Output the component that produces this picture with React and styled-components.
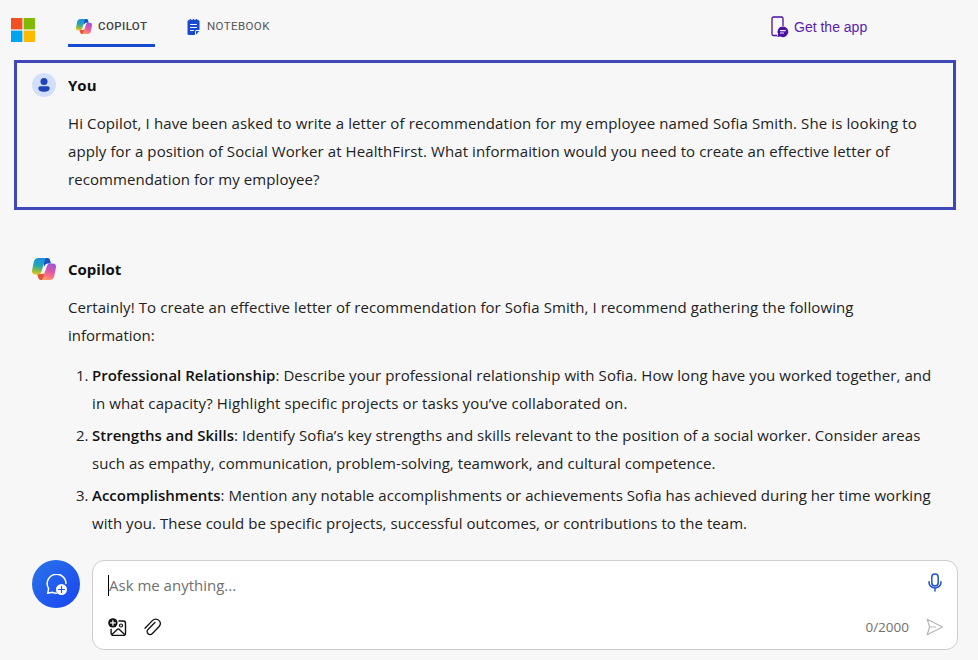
import React from 'react'
import styled, { createGlobalStyle } from 'styled-components'

const GlobalStyle = createGlobalStyle`
    * {
        box-sizing: border-box;
    }
    body {
        margin: 0;
        background: #f7f7f7;
        color: #111;
        font-family: "Open Sans", "Noto Sans", sans-serif;
        overflow: hidden;
    }
`

function MicrosoftLogo() {
    return (
        <svg width="24" height="24" viewBox="0 0 24 24">
            <path d="M0 0h11.4v11.4H0z" fill="#f25022" />
            <path d="M12.6 0H24v11.4H12.6z" fill="#7fba00" />
            <path d="M0 12.6h11.4V24H0z" fill="#00a4ef" />
            <path d="M12.6 12.6H24V24H12.6z" fill="#ffb900" />
        </svg>
    )
}

function CopilotLogo({ id, width, height }) {
    return (
        <svg width={width} height={height} viewBox="0 0 24 22" preserveAspectRatio="none">
            <defs>
                <linearGradient id={`${id}-left`} x1="0.5" y1="0" x2="0.35" y2="1">
                    <stop offset="0" stopColor="#1c8ee0" />
                    <stop offset="0.45" stopColor="#22a5b4" />
                    <stop offset="0.75" stopColor="#7fba4c" />
                    <stop offset="1" stopColor="#f0c319" />
                </linearGradient>
                <linearGradient id={`${id}-right`} x1="0.7" y1="0" x2="0.35" y2="1">
                    <stop offset="0" stopColor="#9a55e0" />
                    <stop offset="0.45" stopColor="#dc58a8" />
                    <stop offset="0.75" stopColor="#fa7080" />
                    <stop offset="1" stopColor="#fba06a" />
                </linearGradient>
            </defs>
            <path d="M11 0h4.500c1.500 0 2.100.8 2.500 2l1 3.500h-3.200c-1.500 0-2.300.7-2.800 2L12 9z" fill="#1b50c4" />
            <path d="M13 22H9c-1.700 0-2.300-1-2.800-2.500L5.200 16H9c1.400 0 2-1 2.500-2.200l1.500-3z" fill="#e45335" />
            <path d="M6.500 0h8.300c-1.200.3-1.700 1.500-2.100 2.800L9.700 12.800C9 15 8 16.500 5.800 16.500H3.300C.4 16.500-.4 14.300.1 12L1.800 4C2.500 1.300 3.900 0 6.500 0z" fill={`url(#${id}-left)`} />
            <path d="M17.500 22H9.200c1.200-.300 1.700-1.500 2.100-2.800l3-10c.7-2.200 1.700-3.700 3.900-3.700h2.500c2.900 0 3.700 2.200 3.200 4.500l-1.700 8c-.7 2.700-2.100 4-4.700 4z" fill={`url(#${id}-right)`} />
            <path d="M14.600 6.500h1.200c-.8.700-1.200 1.700-1.500 2.700l-2 6.600H9.400c.9-.6 1.300-1.600 1.600-2.600l1.200-4c.4-1.400 1-2.500 2.400-2.700z" fill="#fbf6f8" />
        </svg>
    )
}

function NotebookIcon() {
    return (
        <svg width="13" height="16" viewBox="0 0 13 16">
            <path d="M2 1h.7V0h1.500v1h1.500V0h1.500v1h1.500V0h1.500v1h.8a1.500 1.500 0 0 1 1.500 1.500V11H9.500A1.500 1.500 0 0 0 8 12.500V16H2a1.500 1.500 0 0 1-1.500-1.500v-12A1.500 1.500 0 0 1 2 1z" fill="#174ad1" />
            <path d="M9 12h3.300L9 15.400z" fill="#174ad1" />
            <path d="M3.500 5.500h6M3.500 8.500h6M3.500 11.500h3" stroke="#f7f7f7" strokeWidth="1" strokeLinecap="round" />
        </svg>
    )
}

function PhoneIcon() {
    return (
        <svg width="18" height="22" viewBox="0 0 18 22">
            <path d="M6 19.500H2.500a1.500 1.500 0 0 1-1.500-1.500V2.500A1.500 1.500 0 0 1 2.500 1h8A1.500 1.500 0 0 1 12 2.500V10" fill="none" stroke="#4a12a3" strokeWidth="1.300" />
            <path d="M12 10.500a5.300 5.300 0 1 1-2.500 10L6.300 21l.8-2.800A5.300 5.300 0 0 1 12 10.500z" fill="#4a12a3" />
            <path d="M9.500 14.600h4.800M9.500 17h3" stroke="#f7f7f7" strokeWidth="1.200" strokeLinecap="round" />
        </svg>
    )
}

function PersonIcon() {
    return (
        <svg width="12" height="14" viewBox="0 0 12 14">
            <circle cx="6" cy="3.500" r="3.500" fill="#1d45b8" />
            <path d="M2.300 8.300h7.400c1.200 0 2 .8 2 1.900 0 2.300-2.600 3.600-5.700 3.600S.3 12.500.3 10.200c0-1.100.8-1.900 2-1.900z" fill="#1d45b8" />
        </svg>
    )
}

function NewTopicIcon() {
    return (
        <svg width="22" height="22" viewBox="0 0 22 22" fill="none">
            <path d="M10.500 19.200c-1.500 0-2.800-.3-4-.9l-4.800 1 .9-4.700A9.400 9.400 0 1 1 20 9.500" stroke="#fff" strokeWidth="1.500" strokeLinejoin="round" strokeLinecap="round" />
            <circle cx="15.500" cy="15.500" r="5.500" fill="#fff" />
            <path d="M15.500 12.500v6M12.500 15.500h6" stroke="#1d58e8" strokeWidth="1.200" strokeLinecap="round" />
        </svg>
    )
}

function AddImageIcon() {
    return (
        <svg width="19" height="19" viewBox="0 0 19 19" fill="none">
            <path d="M10.500 3h4.800A2.200 2.200 0 0 1 17.500 5.200v10A2.200 2.200 0 0 1 15.300 17.400h-10A2.200 2.200 0 0 1 3.100 15.200v-4.500" stroke="#111" strokeWidth="1.400" />
            <path d="M4 16.500l5.200-5a1.600 1.600 0 0 1 2.200 0l5.200 5" stroke="#111" strokeWidth="1.300" />
            <circle cx="13" cy="7.500" r="1.500" stroke="#111" strokeWidth="1.200" />
            <circle cx="4.900" cy="4.900" r="4.700" fill="#111" />
            <path d="M4.900 2.500v4.800M2.500 4.900h4.800" stroke="#fff" strokeWidth="1.200" strokeLinecap="round" />
        </svg>
    )
}

function ClipIcon() {
    return (
        <svg width="18" height="18" viewBox="0 0 18 18" fill="none" stroke="#111" strokeWidth="1.300" strokeLinecap="round">
            <path d="M1 10.200L8.600 2.400a4.300 4.300 0 0 1 6.300 0c1.900 1.900 1.900 4.300 0 6.300l-6.700 7a2.900 2.900 0 0 1-4.200 0c-1.200-1.200-1.200-3 0-4.200l6.900-7" />
        </svg>
    )
}

function MicIcon() {
    return (
        <svg width="14" height="19" viewBox="0 0 14 19" fill="none" stroke="#2250cf" strokeWidth="1.500" strokeLinecap="round">
            <rect x="3.800" y="1" width="6.400" height="12" rx="3.200" />
            <path d="M1 8.800v.7a6 5.500 0 0 0 12 0v-.7M7 15.200V18" />
        </svg>
    )
}

function SendIcon() {
    return (
        <svg width="18" height="18" viewBox="0 0 18 18" fill="none" stroke="#b5b5b5" strokeWidth="1.200" strokeLinejoin="round">
            <path d="M1.200 1.200L16.500 9 1.200 16.700 3.600 9zM3.600 9h6.200" />
        </svg>
    )
}

function App() {
    return (
        <Page>
            <GlobalStyle />
            <Header>
                <Brand>
                    <MicrosoftLogo />
                </Brand>
                <Tab $active>
                    <CopilotLogo id="tab" width={16} height={15} />
                    <TabLabel $active>COPILOT</TabLabel>
                </Tab>
                <Tab>
                    <NotebookIcon />
                    <TabLabel>NOTEBOOK</TabLabel>
                </Tab>
                <AppLink>
                    <PhoneIcon />
                    Get the app
                </AppLink>
            </Header>
            <Prompt>
                <Author>
                    <Avatar>
                        <PersonIcon />
                    </Avatar>
                    <Name>You</Name>
                </Author>
                <Message>
                    <Line $spacing={0.12}>Hi Copilot, I have been asked to write a letter of recommendation for my employee named Sofia Smith. She is looking to</Line>
                    <Line $spacing={0.095}>apply for a position of Social Worker at HealthFirst. What informaition would you need to create an effective letter of</Line>
                    <Line $spacing={0.07}>recommendation for my employee?</Line>
                </Message>
            </Prompt>
            <Answer>
                <Author>
                    <CopilotLogo id="answer" width={24} height={22} />
                    <Name>Copilot</Name>
                </Author>
                <Message>
                    <Line $spacing={0.083}>Certainly! To create an effective letter of recommendation for Sofia Smith, I recommend gathering the following</Line>
                    <Line>information:</Line>
                </Message>
                <List>
                    <Item>
                        <Number>1.</Number>
                        <div>
                            <Line $spacing={0.07}><Term>Professional Relationship</Term>: Describe your professional relationship with Sofia. How long have you worked together, and</Line>
                            <Line $spacing={0.13}>in what capacity? Highlight specific projects or tasks you’ve collaborated on.</Line>
                        </div>
                    </Item>
                    <Item>
                        <Number>2.</Number>
                        <div>
                            <Line $spacing={0.065}><Term>Strengths and Skills</Term>: Identify Sofia’s key strengths and skills relevant to the position of a social worker. Consider areas</Line>
                            <Line $spacing={0.05}>such as empathy, communication, problem-solving, teamwork, and cultural competence.</Line>
                        </div>
                    </Item>
                    <Item>
                        <Number>3.</Number>
                        <div>
                            <Line $spacing={0.065}><Term>Accomplishments</Term>: Mention any notable accomplishments or achievements Sofia has achieved during her time working</Line>
                            <Line $spacing={0.053}>with you. These could be specific projects, successful outcomes, or contributions to the team.</Line>
                        </div>
                    </Item>
                </List>
            </Answer>
            <Composer>
                <NewTopic>
                    <NewTopicIcon />
                </NewTopic>
                <InputBox>
                    <InputRow>
                        <Caret />
                        <Placeholder>Ask me anything...</Placeholder>
                        <MicButton>
                            <MicIcon />
                        </MicButton>
                    </InputRow>
                    <Tools>
                        <AddImageIcon />
                        <ClipIcon />
                        <Counter>0/2000</Counter>
                        <SendIcon />
                    </Tools>
                </InputBox>
            </Composer>
        </Page>
    )
}

export default App


const Page = styled.div`
    width: 978px;
    height: 660px;
    display: flex;
    flex-direction: column;
    background: #f7f7f7;
`

const Header = styled.header`
    height: 60px;
    display: flex;
    align-items: flex-start;
    padding-left: 11px;
`

const Brand = styled.div`
    width: 57px;
    padding-top: 18px;
    svg {
        display: block;
    }
`

const Tab = styled.div`
    height: 47px;
    display: flex;
    align-items: center;
    gap: ${props => props.$active ? '6px' : '7px'};
    width: ${props => props.$active ? '87px' : '110px'};
    margin-right: ${props => props.$active ? '32px' : '0'};
    padding: ${props => props.$active ? '9px 0 0 8px' : '9px 0 0'};
    border-bottom: 3px solid ${props => props.$active ? '#174ad1' : 'transparent'};
`

const TabLabel = styled.span`
    margin-top: -2px;
    font-family: Roboto, sans-serif;
    font-size: 11.5px;
    letter-spacing: 0.4px;
    font-weight: ${props => props.$active ? 500 : 400};
    color: ${props => props.$active ? '#444' : '#555'};
`

const AppLink = styled.div`
    display: flex;
    align-items: center;
    gap: 5px;
    margin: 16px 0 0 474px;
    font-family: "Liberation Sans", Arial, sans-serif;
    font-size: 14px;
    color: #5a22ae;
`

const Prompt = styled.section`
    width: 942px;
    height: 150px;
    margin-left: 14px;
    padding: 10px 15px;
    border: 3px solid #4048b8;
`

const Answer = styled.section`
    height: 350px;
    padding: 47px 32px 0;
`

const Author = styled.div`
    height: 24px;
    display: flex;
    align-items: center;
    gap: 12px;
`

const Avatar = styled.div`
    width: 24px;
    height: 24px;
    border-radius: 50%;
    background: #d3defa;
    display: flex;
    align-items: center;
    justify-content: center;
`

const Name = styled.div`
    font-size: 15px;
    font-weight: 700;
`

const Message = styled.div`
    padding: 12px 0 0 36px;
`

const Line = styled.div`
    height: 28px;
    line-height: 28px;
    font-size: 15px;
    color: #222;
    white-space: nowrap;
    letter-spacing: ${props => props.$spacing || 0}px;
`

const List = styled.div`
    display: flex;
    flex-direction: column;
    gap: 4px;
    margin-top: 12px;
    padding-left: 44px;
`

const Item = styled.div`
    display: flex;
`

const Number = styled.div`
    width: 16px;
    line-height: 28px;
    font-size: 15px;
    color: #222;
`

const Term = styled.span`
    font-weight: 600;
    color: #111;
    letter-spacing: 0;
`

const Composer = styled.div`
    display: flex;
    gap: 12px;
    padding-left: 32px;
`

const NewTopic = styled.div`
    width: 48px;
    height: 48px;
    border-radius: 50%;
    background: linear-gradient(135deg, #2870ea 10%, #1b48ef 90%);
    display: flex;
    align-items: center;
    justify-content: center;
    padding: 1px 0 0 1px;
`

const InputBox = styled.div`
    width: 866px;
    height: 90px;
    padding: 12px 13px 0 15px;
    background: #fff;
    border: 1px solid #ccc;
    border-radius: 12px;
`

const InputRow = styled.div`
    height: 24px;
    display: flex;
    align-items: center;
`

const Caret = styled.div`
    width: 1px;
    height: 21px;
    background: #000;
`

const Placeholder = styled.div`
    flex: 1;
    font-size: 15px;
    color: #707070;
`

const MicButton = styled.div`
    height: 24px;
    margin-right: 2px;
`

const Tools = styled.div`
    height: 20px;
    display: flex;
    align-items: center;
    margin-top: 20px;
    gap: 17px;
`

const Counter = styled.div`
    margin-left: auto;
    font-size: 13.5px;
    color: #707070;
`
